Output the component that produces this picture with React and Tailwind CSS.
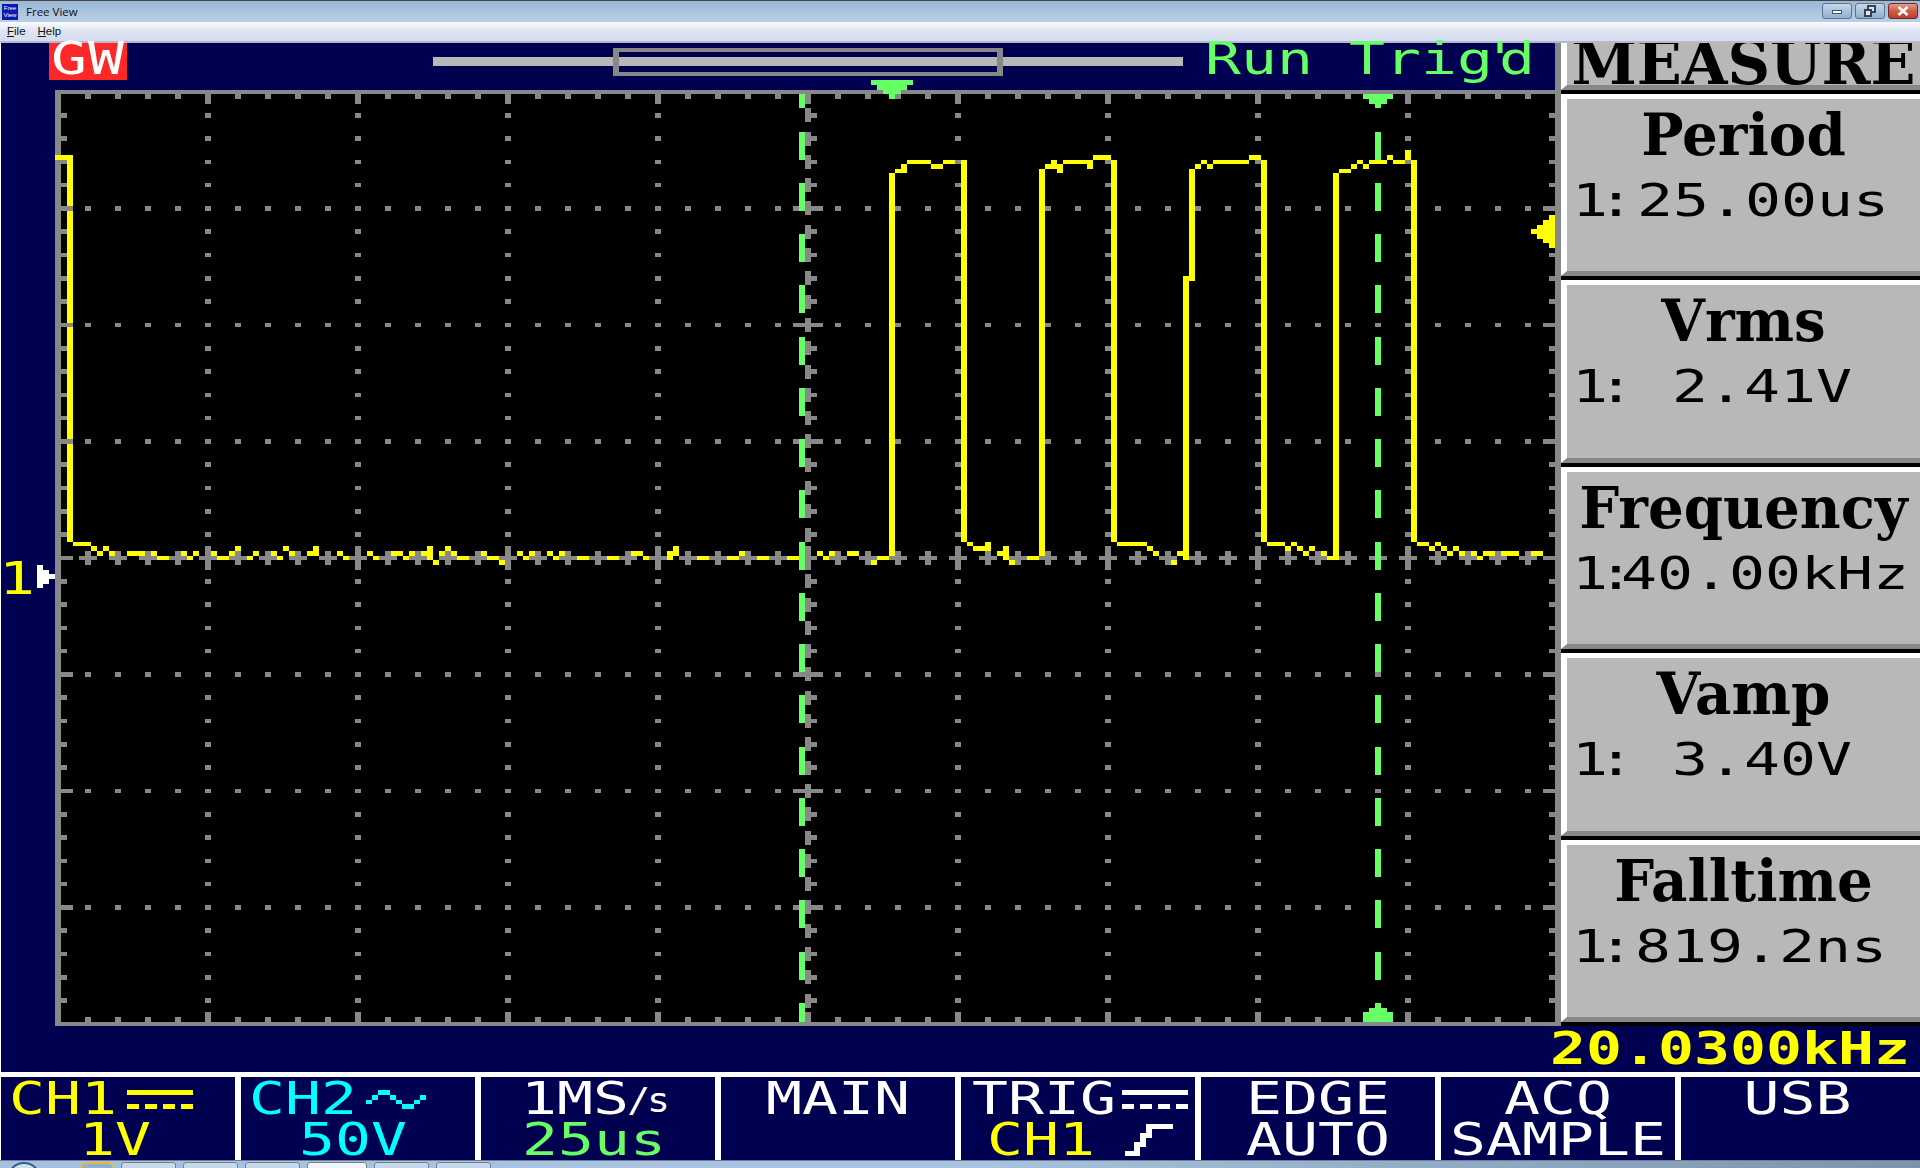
import React from 'react';

const GRAY = '#888888';
const YEL = '#ffff00';
const GRN = '#66ff66';

const cx = (c) => 55 + 6 * c;
const cy = (r) => 89.6 + 4.66 * r;
const box = (c0, c1, r0, r1) => {
  const x = cx(c0);
  const y = cy(r0);
  const w = 6 * (c1 - c0 + 1);
  const h = 4.66 * (r1 - r0 + 1);
  return `M${x} ${y}h${w}v${h}h${-w}z`;
};

function gridPath() {
  let d = '';
  d += box(0, 250, 0, 0) + box(0, 250, 200, 200) + box(0, 0, 0, 200) + box(250, 250, 0, 200);
  for (let c = 5; c < 250; c += 5) {
    const major = c % 25 === 0;
    d += box(c, c, 1, major ? 2 : 1);
    d += box(c, c, major ? 198 : 199, 199);
  }
  for (let r = 5; r < 200; r += 5) {
    const major = r % 25 === 0;
    d += box(1, major ? 2 : 1, r, r);
    d += box(major ? 248 : 249, 249, r, r);
  }
  for (let c = 25; c < 250; c += 25) {
    for (let r = 5; r < 200; r += 5) {
      if (c === 125) {
        if (r % 25 === 0 && r !== 100) {
          d += box(123, 127, r, r) + box(125, 125, r - 1, r + 1);
        } else if (r !== 100) {
          d += box(125, 126, r, r) + box(125, 125, r - 1, r + 1);
        }
      } else if (r !== 100) {
        d += box(c, c, r, r);
      }
    }
  }
  for (let r = 25; r < 200; r += 25) {
    if (r === 100) continue;
    for (let c = 5; c < 250; c += 5) d += box(c, c, r, r);
  }
  for (let c = 5; c < 250; c += 5) {
    if (c % 25 === 0) d += box(c - 1, c + 1, 100, 100) + box(c, c, 98, 102);
    else d += box(c - 1, c + 1, 100, 100) + box(c, c, 99, 101);
  }
  return d;
}

const trace = [
  [2,2,14,96],[3,5,97,97],[6,6,98,98],[7,7,99,99],[8,8,98,98],[9,10,99,99],[11,11,100,100],[12,14,99,99],[15,15,100,100],[16,16,99,99],[17,19,100,100],[20,21,99,99],[22,22,100,100],[23,23,99,99],[24,25,100,100],[26,26,99,99],[27,28,100,100],[29,29,99,99],[30,30,98,99],[31,32,100,100],[33,33,99,99],[34,35,100,100],[36,36,99,99],[37,37,100,100],[38,38,98,98],[39,39,99,100],[40,40,101,101],[41,41,100,100],[42,42,99,99],[43,43,98,99],[44,44,100,100],[45,45,99,99],[46,46,100,100],[47,47,99,99],[48,51,100,100],[52,52,99,99],[53,55,100,100],
  [56,57,99,99],[58,58,100,100],[59,60,99,99],[61,61,99,100],[62,62,98,100],[63,63,101,101],[64,64,99,100],[65,65,98,98],[66,66,99,99],[67,69,100,100],[70,70,101,101],[71,71,99,99],[72,73,100,100],[74,74,100,101],[75,76,100,100],[77,77,99,99],[78,78,100,100],[79,80,99,99],[81,81,100,100],[82,82,99,99],[83,83,100,100],[84,85,99,99],[86,94,100,100],[95,97,99,99],[98,101,100,100],[102,102,99,100],[103,103,98,99],[104,104,100,100],[105,105,101,101],[106,113,100,100],[114,115,99,99],[116,119,100,100],[120,120,99,99],[121,124,100,100],[125,125,101,101],[126,126,100,100],[127,127,99,99],[128,128,100,100],[129,130,99,99],[131,131,100,100],[132,133,99,99],[134,135,100,100],[136,136,100,101],[137,138,100,100],
  [139,139,18,100],[140,140,17,17],[141,141,16,17],[142,145,15,15],[146,147,16,16],[148,150,15,15],[151,151,15,96],
  [152,152,97,97],[153,154,98,98],[155,155,97,99],[156,156,100,100],[157,157,99,99],[158,158,98,100],[159,159,100,101],[160,160,99,99],[161,163,100,100],
  [164,164,17,100],[165,165,16,16],[166,166,15,16],[167,167,16,17],[168,171,15,15],[172,172,15,16],[173,175,14,14],[176,176,15,96],
  [177,181,97,97],[182,182,98,98],[183,183,99,99],[184,185,100,100],[186,186,100,101],[187,187,99,99],
  [188,188,40,100],[189,189,17,40],[190,190,16,16],[191,191,15,15],[192,192,16,16],[193,198,15,15],[199,200,14,14],[201,201,15,96],
  [202,204,97,97],[205,205,98,98],[206,206,97,97],[207,207,98,98],[208,208,99,99],[209,209,98,98],[210,211,99,99],[212,212,100,100],
  [213,213,18,100],[214,215,17,17],[216,216,16,16],[217,217,15,15],[218,218,16,16],[219,220,15,15],[221,221,15,15],[222,222,14,14],[223,224,15,15],[225,225,13,14],[226,226,15,96],
  [227,228,97,97],[229,229,98,98],[230,230,97,97],[231,231,98,98],[232,232,99,99],[233,233,98,98],[234,236,99,99],[237,237,100,100],[238,243,99,99],[244,244,100,100],[245,247,99,99],[248,249,100,100],
];

const yellowPath = trace.map(([a, b, c, d]) => box(a, b, c, d)).join('');

function cursorPath() {
  let d = box(124, 124, 1, 3);
  for (let r = 9; r < 200; r += 11) {
    const end = Math.min(r + 5, 199);
    d += box(124, 124, r, end) + box(220, 220, r, end);
  }
  d += box(136, 142, -2, -2) + box(137, 141, -1, -1) + box(138, 140, 0, 0) + box(139, 139, 1, 1);
  d += box(218, 222, 1, 1) + box(219, 221, 2, 2) + box(220, 220, 3, 3);
  d += box(218, 222, 198, 199) + box(219, 221, 197, 197);
  return d;
}

const refMark =
  box(246, 246, 30, 30) + box(247, 247, 29, 31) + box(248, 248, 28, 32) + box(249, 249, 27, 33);
const chanMark = box(-3, -3, 102, 106) + box(-2, -2, 103, 105) + box(-1, -1, 104, 104);

function Scope() {
  return (
    <svg
      className="block w-[1506px] h-[936px] overflow-visible shrink-0"
      viewBox="55 90 1506 936"
      shapeRendering="crispEdges"
    >
      <rect x="55" y="90" width="1506" height="936" fill="#000000" />
      <path d={yellowPath} fill={YEL} />
      <path d={gridPath()} fill={GRAY} />
      <path d={box(0, 2, 14, 14)} fill={YEL} />
      <path d={cursorPath()} fill={GRN} />
      <path d={refMark} fill={YEL} />
      <path d={chanMark} fill="#ffffff" />
    </svg>
  );
}

const mono =
  "block h-[32px] leading-[32px] text-[59.8px] whitespace-pre scale-y-[0.73] font-['DejaVu_Sans_Mono',monospace]";

function Coupling({ color }) {
  return (
    <svg width="66" height="19" viewBox="0 0 66 19" fill={color} shapeRendering="crispEdges" className="shrink-0">
      <rect x="0" y="0" width="66" height="5" />
      <rect x="0" y="14" width="12" height="5" />
      <rect x="18" y="14" width="12" height="5" />
      <rect x="36" y="14" width="12" height="5" />
      <rect x="54" y="14" width="12" height="5" />
    </svg>
  );
}

function Wave() {
  const rows = [2, 1, 0, 0, 1, 2, 3, 3, 2, 1];
  return (
    <svg width="60" height="19" viewBox="0 0 60 19" fill="#00ffff" shapeRendering="crispEdges" className="shrink-0">
      {rows.map((r, i) => (
        <rect key={i} x={i * 6} y={r * 4.75} width="6" height="4.75" />
      ))}
    </svg>
  );
}

function EdgeIcon() {
  return (
    <svg width="48" height="32" viewBox="0 0 48 32" fill="#ffffff" shapeRendering="crispEdges" className="shrink-0">
      <rect x="0" y="27" width="15" height="5" />
      <rect x="9" y="18" width="6" height="9" />
      <rect x="15" y="9" width="6" height="14" />
      <rect x="21" y="0" width="6" height="14" />
      <rect x="27" y="0" width="21" height="5" />
    </svg>
  );
}

function SoftKey({ children, last }) {
  return (
    <div
      className={`${last ? 'flex-1' : 'w-[234px] shrink-0'} bg-[#000050] flex flex-col items-center gap-[9px] pt-[6px] h-full`}
    >
      {children}
    </div>
  );
}

function Measure({ title, rest, prefixWidth }) {
  return (
    <div className="h-[186.4px] border-b-[4.6px] border-b-black flex flex-col">
      <div className="flex-1 border-t-[5px] border-t-white border-b-[5px] border-b-[#888888] border-l-[6px] border-l-white bg-[#b8b8b8] flex flex-col text-black">
        <div className="h-[52px] mt-[10px] leading-[52px] text-center text-[58px] scale-x-[0.97] font-bold font-['DejaVu_Serif',serif] whitespace-pre">
          {title}
        </div>
        <div className="mt-[24px] pl-[5px] flex">
          <span className={`${prefixWidth} flex shrink-0`}>
            <span className={mono}>1</span>
            <span className={`${mono} -ml-[10px]`}>:</span>
          </span>
          <span className={mono}>{rest}</span>
        </div>
      </div>
    </div>
  );
}

function TaskBtn({ children, active }) {
  return (
    <div
      className={`h-[12px] rounded-t-[3px] border border-[#6f8296] flex justify-center pt-[5px] ${active ? 'w-[60px] bg-[#f2f6fb]' : 'w-[55px] bg-[#c9d9e9]'}`}
    >
      {children}
    </div>
  );
}

export default function App() {
  return (
    <div className="w-[1920px] h-[1168px] overflow-hidden bg-white flex flex-col font-['Open_Sans',sans-serif]">
      {/* Title bar */}
      <div className="h-[22px] shrink-0 border-t border-t-[#444444] bg-gradient-to-b from-[#9bb8d6] to-[#b9cfe6] flex items-center pl-[2px] pr-[2px]">
        <div className="w-[16px] h-[16px] bg-[#0a1ab0] text-white text-[6px] leading-[7px] font-['Liberation_Sans',sans-serif] flex flex-col items-center justify-center overflow-hidden">
          <span>Free</span>
          <span>View</span>
        </div>
        <span className="ml-[8px] text-[11.5px] text-[#111111]">Free View</span>
        <div className="ml-auto flex gap-[3px] -mt-[2px]">
          <div className="w-[30px] h-[16px] rounded-[3px] border border-[#5f7488] bg-gradient-to-b from-[#c8d9ea] via-[#a9c2da] to-[#8fb0ce] flex items-center justify-center">
            <span className="block w-[10px] h-[4px] mt-[3px] bg-white border border-[#445566]" />
          </div>
          <div className="w-[30px] h-[16px] rounded-[3px] border border-[#5f7488] bg-gradient-to-b from-[#c8d9ea] via-[#a9c2da] to-[#8fb0ce] flex items-center justify-center">
            <svg width="12" height="12" viewBox="0 0 12 12" fill="none" stroke="#33445a" strokeWidth="1.4" shapeRendering="crispEdges">
              <rect x="4" y="1" width="7" height="6" fill="#dfe8f2" />
              <rect x="1" y="5" width="6" height="6" fill="#dfe8f2" />
            </svg>
          </div>
          <div className="w-[30px] h-[16px] rounded-[3px] border border-[#6b2a2a] bg-gradient-to-b from-[#e09a8c] via-[#cf5c45] to-[#b8402c] flex items-center justify-center">
            <svg width="12" height="10" viewBox="0 0 12 10" stroke="#ffffff" strokeWidth="2.6">
              <path d="M1.5 1 L10.5 9 M10.5 1 L1.5 9" />
            </svg>
          </div>
        </div>
      </div>

      {/* Menu bar */}
      <div className="h-[21px] shrink-0 border-b-2 border-b-[#b4bacb] bg-gradient-to-b from-[#fbfcfe] via-[#dfe4f4] to-[#d6dcf0] flex items-center gap-[12px] pl-[7px] text-[11.5px] text-[#111111] font-['Liberation_Sans',sans-serif]">
        <span><span className="underline">F</span>ile</span>
        <span><span className="underline">H</span>elp</span>
      </div>

      {/* Scope + measurement column */}
      <div className="h-[983px] shrink-0 flex pl-px">
        <div className="w-[1560px] shrink-0 bg-[#000050] flex flex-col">
          <div className="h-[47px] shrink-0 border-r-[6px] border-r-[#888888] flex">
            <div className="ml-[48px] w-[78px] h-[37px] bg-[#ff2828] text-white flex justify-center">
              <span className={`${mono} tracking-[1px]`}>GW</span>
            </div>
            <div className="ml-[306px] mt-[14px] w-[750px] h-[9px] bg-[#b8b8b8] relative shrink-0">
              <div className="absolute left-[180px] top-[-9px] w-[390px] h-[28px] border-x-[6px] border-y-[4.6px] border-[#888888]" />
            </div>
            <div className="ml-[22px] text-[#66ff66] flex">
              <span className={mono}>Run</span>
            </div>
            <div className="ml-[36px] text-[#66ff66] flex">
              <span className={mono}>Trig</span>
              <span className={`${mono} -ml-[11px] -mr-[19px]`}>'</span>
              <span className={mono}>d</span>
            </div>
          </div>
          <div className="flex flex-1">
            <div className="w-[54px] shrink-0 relative">
              <span className={`${mono} absolute left-[-2px] top-[473px] text-[#ffff00]`}>1</span>
            </div>
            <Scope />
          </div>
        </div>
        <div className="flex-1 flex flex-col min-w-0">
          <div className="h-[51px] shrink-0 border-b-[4px] border-b-black">
            <div className="h-full border-b-[5px] border-b-[#888888] border-l-[6px] border-l-white bg-[#b8b8b8] text-black text-center overflow-hidden text-[59px] leading-[42px] font-bold font-['DejaVu_Serif',serif] whitespace-pre">
              MEASURE
            </div>
          </div>
          <Measure title="Period" rest="25.00us" prefixWidth="w-[65px]" />
          <Measure title="Vrms" rest="2.41V" prefixWidth="w-[100px]" />
          <Measure title="Frequency" rest="40.00kHz" prefixWidth="w-[49px]" />
          <Measure title="Vamp" rest="3.40V" prefixWidth="w-[100px]" />
          <Measure title="Falltime" rest="819.2ns" prefixWidth="w-[63px]" />
        </div>
      </div>

      {/* Frequency counter */}
      <div className="h-[46px] shrink-0 ml-px bg-[#000050] flex justify-end pt-[7px] pr-[10px]">
        <span className={`${mono} font-bold text-[#ffff00]`}>20.0300kHz</span>
      </div>

      {/* Soft keys */}
      <div className="h-[88px] shrink-0 border-t-[5px] border-t-white bg-white flex gap-[6px] pl-px">
        <SoftKey>
          <div className="w-full flex items-center pl-[8px] gap-[10px] text-[#ffff00]">
            <span className={mono}>CH1</span>
            <Coupling color="#ffff00" />
          </div>
          <span className={`${mono} text-[#ffff00] -ml-[6px]`}>1V</span>
        </SoftKey>
        <SoftKey>
          <div className="w-full flex items-center pl-[8px] gap-[9px] text-[#00ffff]">
            <span className={mono}>CH2</span>
            <Wave />
          </div>
          <span className={`${mono} text-[#00ffff] -ml-[10px]`}>50V</span>
        </SoftKey>
        <SoftKey>
          <div className="flex items-end text-white -ml-[8px]">
            <span className={mono}>1MS</span>
            <span className="block h-[32px] leading-[34px] text-[38px] scale-y-[0.9] -ml-[2px] tracking-[-3px] font-['DejaVu_Sans_Mono',monospace]">/s</span>
          </div>
          <span className={`${mono} text-[#66ff66] -ml-[8px]`}>25us</span>
        </SoftKey>
        <SoftKey>
          <span className={`${mono} text-white`}>MAIN</span>
        </SoftKey>
        <SoftKey>
          <div className="w-full flex items-center pl-[11px] gap-[6px] text-white">
            <span className={mono}>TRIG</span>
            <Coupling color="#ffffff" />
          </div>
          <div className="w-full flex items-center pl-[26px] gap-[30px]">
            <span className={`${mono} text-[#ffff00]`}>CH1</span>
            <EdgeIcon />
          </div>
        </SoftKey>
        <SoftKey>
          <span className={`${mono} text-white`}>EDGE</span>
          <span className={`${mono} text-white`}>AUTO</span>
        </SoftKey>
        <SoftKey>
          <span className={`${mono} text-white`}>ACQ</span>
          <span className={`${mono} text-white`}>SAMPLE</span>
        </SoftKey>
        <SoftKey last>
          <span className={`${mono} text-white -ml-[6px]`}>USB</span>
        </SoftKey>
      </div>

      {/* Taskbar */}
      <div className="h-[8px] shrink-0 overflow-hidden border-t border-t-[#6c7f94] bg-gradient-to-r from-[#a5c1dd] via-[#a9c4df] to-[#7c93ab] flex gap-[7px] pt-[1px]">
        <div className="ml-[7px] w-[34px] h-[34px] rounded-full border-2 border-[#2d5f8f] bg-[#cfe0ef] shrink-0" />
        <div className="ml-[32px] w-[34px] h-[12px] rounded-full border-2 border-[#e8b83a] bg-[#8fb0d0] shrink-0" />
        <TaskBtn><span className="block w-[14px] h-[8px] rounded-t-[2px] bg-[#cbb98a]" /></TaskBtn>
        <TaskBtn><span className="block w-[16px] h-[16px] rounded-full bg-[#d9503f]" /></TaskBtn>
        <TaskBtn><span className="block w-[16px] h-[16px] rounded-full bg-[#3a87c8]" /></TaskBtn>
        <TaskBtn active><span className="block w-[32px] h-[8px] bg-[#0a0ad0]" /></TaskBtn>
        <TaskBtn><span className="block w-[26px] h-[8px] border-2 border-[#4a7fb5] rounded-t-[2px]" /></TaskBtn>
        <TaskBtn><span className="block w-[12px] h-[8px] rounded-t-[3px] bg-[#d8b078]" /></TaskBtn>
      </div>
    </div>
  );
}
